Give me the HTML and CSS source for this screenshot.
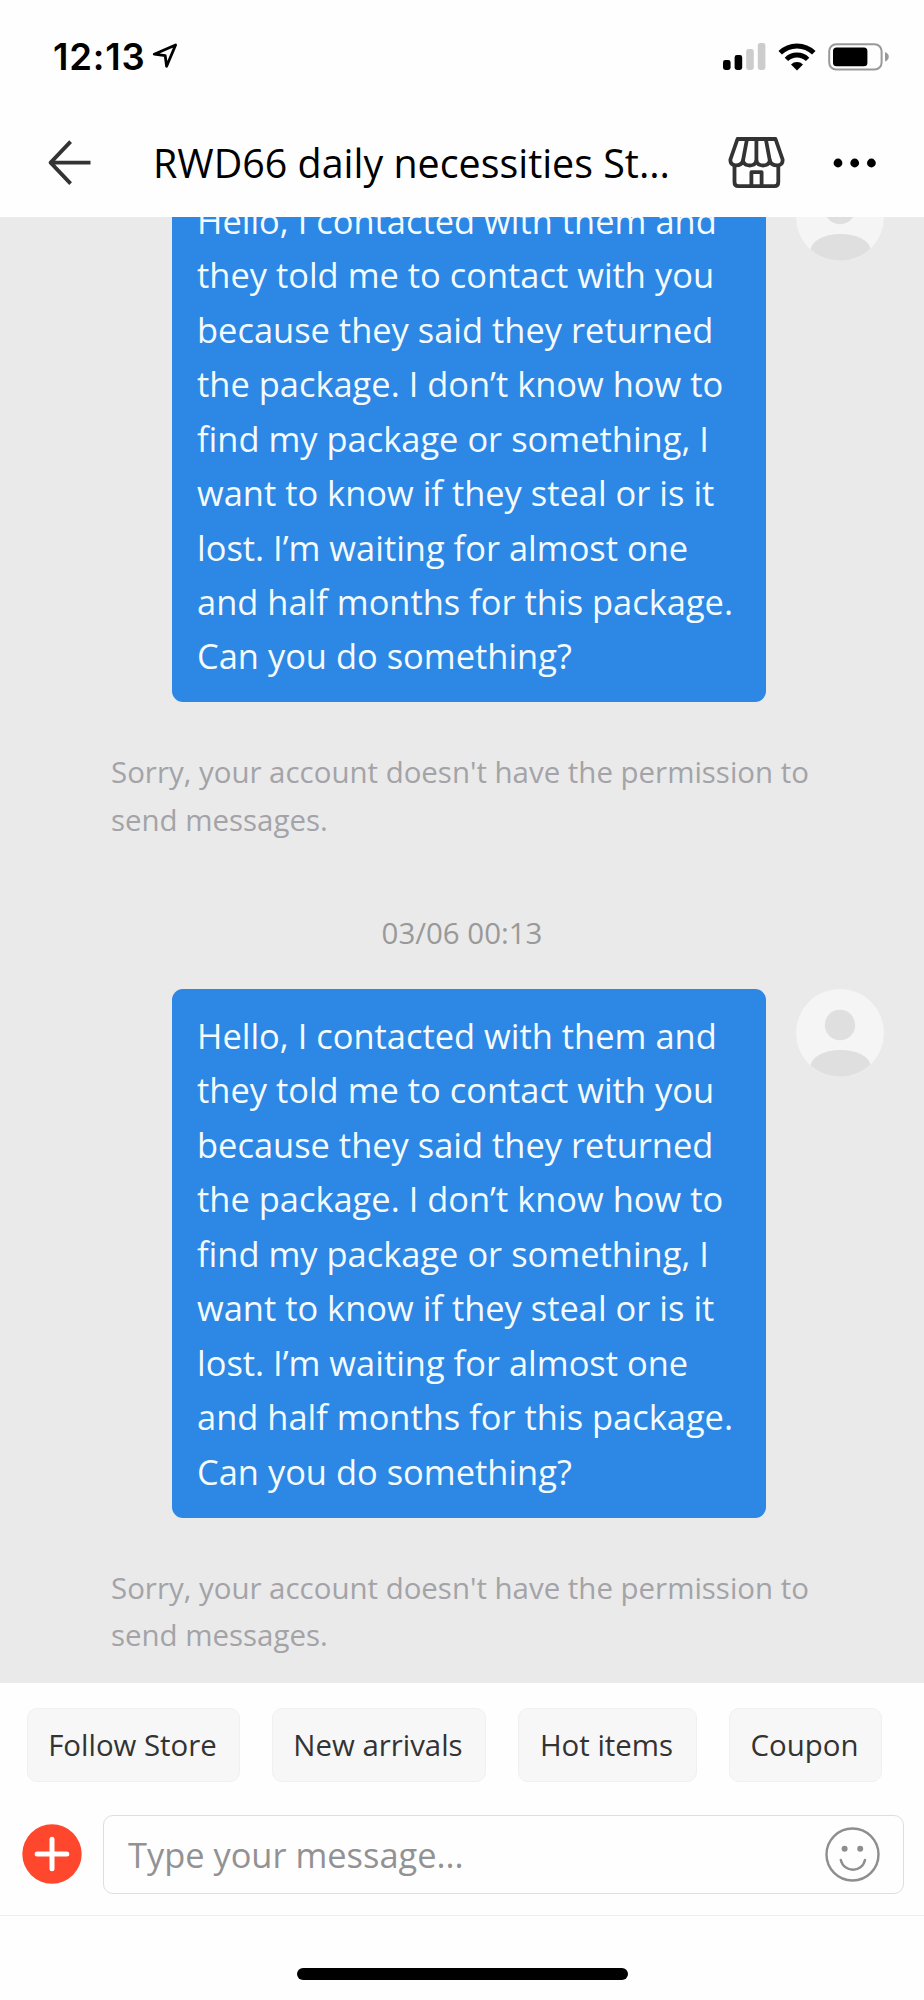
FILE: index.html
```html
<!DOCTYPE html>
<html lang="en">
<head>
    <meta charset="UTF-8">
    <meta name="viewport" content="width=device-width, initial-scale=1.0">
    <title>RWD66 daily necessities Store</title>
    <link rel="stylesheet" href="styles.css">
</head>
<body>

    <div class="screen">
        <!-- Status bar -->
        <div class="status-bar">
            <div class="time">12:13</div>
            <svg class="location" width="26" height="26" viewBox="0 0 26 26">
                <path d="M2.2 11.2 L23.6 2 L14.6 23.2 L13.2 12.6 Z" fill="none" stroke="#000" stroke-width="2.8" stroke-linejoin="round"/>
            </svg>
            <div class="status-icons">
                <svg width="43" height="28" viewBox="0 0 43 28">
                    <rect x="0" y="17" width="7.6" height="10" rx="2.4"/>
                    <rect x="11.6" y="12" width="7.6" height="15" rx="2.4"/>
                    <rect x="23.2" y="6" width="7.6" height="21" rx="2.4" fill="#ccc"/>
                    <rect x="34.8" y="0" width="7.6" height="27" rx="2.4" fill="#ccc"/>
                </svg>
                <svg width="38" height="28" viewBox="0 0 38 28">
                    <path d="M2.2 9.8 A24 24 0 0 1 35.8 9.8" fill="none" stroke="#000" stroke-width="5"/>
                    <path d="M8.4 16.4 A15 15 0 0 1 29.6 16.4" fill="none" stroke="#000" stroke-width="4.8"/>
                    <path d="M19 27.5 L13 21.4 A8.6 8.6 0 0 1 25 21.4 Z"/>
                </svg>
                <svg width="62" height="28" viewBox="0 0 62 28">
                    <rect x="1.2" y="1.2" width="52.4" height="25.4" rx="7" fill="none" stroke="#999" stroke-width="2"/>
                    <rect x="5" y="4.6" width="34.4" height="18.6" rx="3.5"/>
                    <path d="M57 9 Q60.8 10.6 60.8 13.8 Q60.8 17 57 18.6 Z" fill="#999"/>
                </svg>
            </div>
        </div>

        <!-- Header -->
        <div class="header">
            <svg class="back" width="44" height="46" viewBox="0 0 44 46">
                <path d="M22.6 1.6 L2.6 22.6 L22.6 43.6 M2.6 22.6 H42.5" fill="none" stroke="#333" stroke-width="3.8" stroke-linejoin="round"/>
            </svg>
            <h1>RWD66 daily necessities St...</h1>
            <svg class="store" width="57" height="52" viewBox="0 0 57 52">
                <g fill="none" stroke="#333" stroke-width="3.8" stroke-linejoin="round" stroke-linecap="round">
                    <path d="M9.5 2 H47.5 L54.6 22.5 Q55 28 49.5 28.4 Q43 28.5 41.8 23.5 Q40.8 28.5 35 28.5 Q29.4 28.5 28.4 23.5 Q27.4 28.5 21.8 28.5 Q16 28.5 15 23.5 Q13.8 28.5 7.5 28.4 Q2 28 2.4 22.5 Z"/>
                    <path d="M19 2 L15 23.5 M28.4 2 V23.5 M37.8 2 L41.8 23.5"/>
                    <path d="M6.5 29 V45 Q6.5 49.2 10.3 49.2 H46.5 Q50.3 49.2 50.3 45 V29"/>
                    <path d="M23.4 48 V35.2 H33.6 V48"/>
                </g>
            </svg>
            <svg class="more" width="44" height="10" viewBox="0 0 44 10">
                <circle cx="5" cy="5" r="4.4"/>
                <circle cx="21.7" cy="5" r="4.4"/>
                <circle cx="38.4" cy="5" r="4.4"/>
            </svg>
        </div>

        <!-- Messages, scrolled to the bottom -->
        <div class="chat">
            <div class="message">
                <div class="bubble">Hello, I contacted with them and<br>they told me to contact with you<br>because they said they returned<br>the package. I don’t know how to<br>find my package or something, I<br>want to know if they steal or is it<br>lost. I’m waiting for almost one<br>and half months for this package.<br>Can you do something?</div>
                <svg class="avatar" viewBox="0 0 88 88">
                    <circle cx="44" cy="44" r="44" fill="#f5f5f5"/>
                    <circle cx="44" cy="36" r="15.2" fill="#dfdfdf"/>
                    <path d="M14.5 76.5 C19 56 69 56 74.5 75.5 A44 44 0 0 1 14.5 76.5 Z" fill="#dfdfdf"/>
                </svg>
            </div>
            <div class="notice">Sorry, your account doesn't have the permission to<br>send messages.</div>

            <div class="date">03/06 00:13</div>

            <div class="message">
                <div class="bubble">Hello, I contacted with them and<br>they told me to contact with you<br>because they said they returned<br>the package. I don’t know how to<br>find my package or something, I<br>want to know if they steal or is it<br>lost. I’m waiting for almost one<br>and half months for this package.<br>Can you do something?</div>
                <svg class="avatar" viewBox="0 0 88 88">
                    <circle cx="44" cy="44" r="44" fill="#f5f5f5"/>
                    <circle cx="44" cy="36" r="15.2" fill="#dfdfdf"/>
                    <path d="M14.5 76.5 C19 56 69 56 74.5 75.5 A44 44 0 0 1 14.5 76.5 Z" fill="#dfdfdf"/>
                </svg>
            </div>
            <div class="notice">Sorry, your account doesn't have the permission to<br>send messages.</div>
        </div>

        <!-- Quick replies -->
        <div class="chips">
            <button class="chip chip-follow">Follow Store</button>
            <button class="chip chip-new">New arrivals</button>
            <button class="chip chip-hot">Hot items</button>
            <button class="chip chip-coupon">Coupon</button>
        </div>

        <!-- Message input -->
        <div class="composer">
            <svg class="plus" width="60" height="60" viewBox="0 0 60 60">
                <circle cx="30" cy="30" r="29.7" fill="#ff472e"/>
                <path d="M15.2 30 H44.8 M30 15.2 V44.8" stroke="#fff" stroke-width="5" stroke-linecap="round"/>
            </svg>
            <div class="input-box">
                <span class="placeholder">Type your message...</span>
                <svg width="55" height="55" viewBox="0 0 55 55">
                    <circle cx="27.5" cy="27.5" r="26" fill="none" stroke="#8e8e8e" stroke-width="2.4"/>
                    <circle cx="19.6" cy="21.8" r="3" fill="#8e8e8e"/>
                    <circle cx="35.2" cy="21.8" r="3" fill="#8e8e8e"/>
                    <path d="M15.8 33 C19 46 37 46 40 33" fill="none" stroke="#8e8e8e" stroke-width="2.4" stroke-linecap="round"/>
                </svg>
            </div>
        </div>

        <div class="home-area">
            <div class="home-bar"></div>
        </div>
    </div>

</body>
</html>
```
FILE: styles.css
```css
* {
    box-sizing: border-box;
}
body {
    font-family: "Open Sans", sans-serif;
    background-color: #fefefe;
    color: #000;
    margin: 0;
    padding: 0;
}
.screen {
    width: 924px;
    height: 2000px;
    display: flex;
    flex-direction: column;
    overflow: hidden;
}

/* Status bar */
.status-bar {
    height: 110px;
    flex: none;
    display: flex;
    align-items: flex-start;
    padding: 43px 34px 0 53px;
}
.time {
    font-family: Inter, sans-serif;
    font-size: 36.5px;
    font-weight: 600;
    letter-spacing: 0.8px;
    line-height: 28px;
    width: 99px;
}
.status-icons {
    display: flex;
    gap: 12px;
    margin-left: auto;
}

/* Header */
.header {
    height: 107px;
    flex: none;
    display: flex;
    align-items: center;
    padding: 0 47px 2px 48px;
}
h1 {
    font-size: 39.4px;
    font-weight: 400;
    line-height: 54px;
    margin: 0 0 0 61px;
    white-space: nowrap;
}
.store {
    margin-left: auto;
    margin-right: 48px;
}

/* Chat */
.chat {
    height: 1466px;
    flex: none;
    display: flex;
    flex-direction: column;
    justify-content: flex-end;
    background-color: #eaeaea;
    overflow: hidden;
    padding-bottom: 23.3px;
}
.message {
    flex: none;
    display: flex;
    gap: 30px;
    padding-left: 172px;
}
.bubble {
    width: 594px;
    height: 529px;
    background-color: #2c87e5;
    color: #f4fbff;
    font-size: 34.45px;
    line-height: 54.45px;
    padding: 20.5px 24px 0 25px;
    border-radius: 11px;
    white-space: nowrap;
}
.avatar {
    width: 88px;
    height: 88px;
}
.notice {
    flex: none;
    color: #a3a3a8;
    font-size: 29.45px;
    line-height: 47.6px;
    margin-top: 47px;
    padding-left: 111px;
    white-space: nowrap;
}
.date {
    flex: none;
    color: #999;
    font-size: 29.45px;
    line-height: 40px;
    margin: 68px 0 36px;
    text-align: center;
}

/* Quick replies */
.chips {
    height: 132px;
    flex: none;
    display: flex;
    gap: 32px;
    padding: 25px 0 0 27px;
}
.chip {
    height: 74px;
    border: 1px solid #f0f0f0;
    border-radius: 10px;
    background-color: #f7f7f7;
    color: #333;
    font-family: "Open Sans", sans-serif;
    font-size: 29.4px;
    padding: 0 2px 0 0;
    white-space: nowrap;
}
.chip-follow {
    width: 213px;
}
.chip-new {
    width: 214px;
}
.chip-hot {
    width: 179px;
}
.chip-coupon {
    width: 153px;
}

/* Composer */
.composer {
    height: 101px;
    flex: none;
    display: flex;
    align-items: flex-start;
    gap: 21px;
    padding-left: 22px;
    border-bottom: 1px solid #eee;
}
.plus {
    margin-top: 9px;
}
.input-box {
    width: 801px;
    height: 79px;
    display: flex;
    align-items: center;
    justify-content: space-between;
    border: 1px solid #dedede;
    border-radius: 10px;
    padding: 0 23px 0 24px;
}
.placeholder {
    color: #929294;
    font-size: 34.4px;
}

.home-area {
    flex: 1;
    display: flex;
    justify-content: center;
    align-items: flex-start;
    padding-top: 52px;
}
.home-bar {
    width: 331px;
    height: 12px;
    border-radius: 6px;
    background-color: #000;
}
```
